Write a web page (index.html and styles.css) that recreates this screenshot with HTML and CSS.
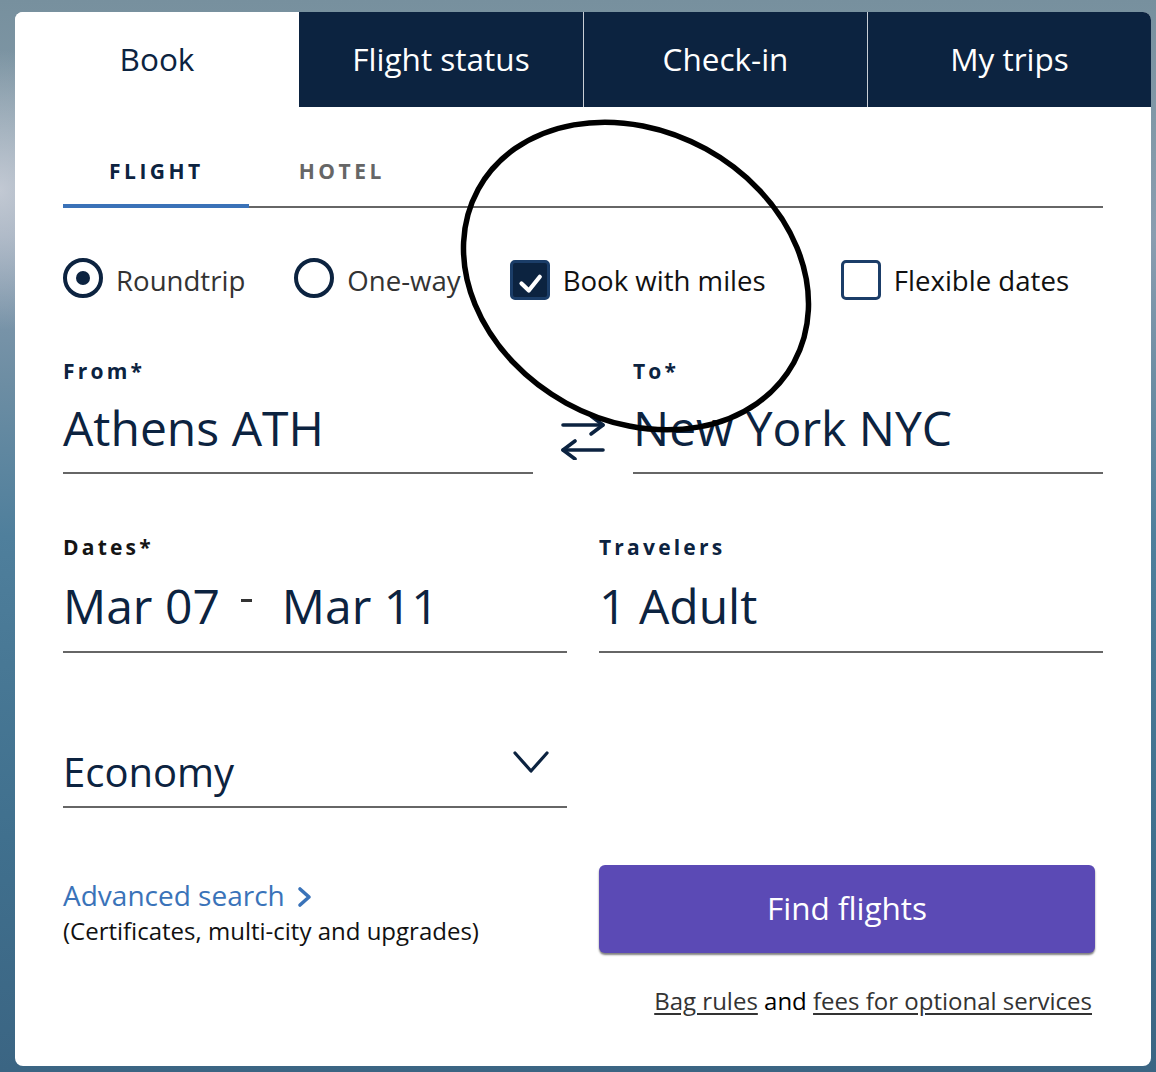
FILE: index.html
```html
<!DOCTYPE html>
<html lang="en">
<head>
<meta charset="utf-8">
<title>Book a flight</title>
<link rel="stylesheet" href="styles.css">
</head>
<body>
<div class="card">
  <nav class="tabs">
    <div class="tab tab-active">Book</div>
    <div class="tab">Flight status</div>
    <div class="tab tab-sep">Check-in</div>
    <div class="tab tab-sep">My trips</div>
  </nav>
  <div class="content">
    <div class="subtabs">
      <div class="subtab subtab-active">FLIGHT</div>
      <div class="subtab">HOTEL</div>
    </div>

    <div class="options">
      <div class="opt"><span class="radio radio-on"></span><span class="opt-text opt-grey">Roundtrip</span></div>
      <div class="opt"><span class="radio"></span><span class="opt-text opt-grey">One-way</span></div>
      <div class="opt"><span class="check check-on"><svg class="tick" viewBox="0 0 34 34" width="34" height="34"><polyline points="8.5,20.5 15.8,27.5 26.8,13.8" fill="none" stroke="#fff" stroke-width="4.2" stroke-linecap="round" stroke-linejoin="round"/></svg></span><span class="opt-text">Book with miles</span></div>
      <div class="opt opt-last"><span class="check"></span><span class="opt-text">Flexible dates</span></div>
    </div>

    <div class="route">
      <div class="field">
        <div class="label">From*</div>
        <div class="value">Athens ATH</div>
      </div>
      <div class="swap">
        <svg viewBox="0 0 46 48" width="46" height="48">
          <g fill="none" stroke="#0c2340" stroke-width="3.6" stroke-linecap="round" stroke-linejoin="round">
            <line x1="3" y1="13" x2="43" y2="13"/>
            <polyline points="31,4 43,13 31,22"/>
            <line x1="3" y1="38" x2="43" y2="38"/>
            <polyline points="15,29 3,38 15,47"/>
          </g>
        </svg>
      </div>
      <div class="field">
        <div class="label">To*</div>
        <div class="value">New York NYC</div>
      </div>
    </div>

    <div class="pair">
      <div class="field field-tall">
        <div class="label label-dark">Dates*</div>
        <div class="value dates"><span>Mar 07</span><span class="dash"></span><span>Mar 11</span></div>
      </div>
      <div class="field field-tall">
        <div class="label">Travelers</div>
        <div class="value">1 Adult</div>
      </div>
    </div>

    <div class="pair">
      <div class="field field-select">
        <div class="value value-select">Economy</div>
        <svg class="chev" viewBox="0 0 38 24" width="38" height="24"><polyline points="3,3 19,21 35,3" fill="none" stroke="#0c2340" stroke-width="3.2" stroke-linecap="round" stroke-linejoin="round"/></svg>
      </div>
    </div>

    <div class="pair bottom">
      <div class="adv">
        <div class="adv-link">Advanced search<svg class="adv-chev" viewBox="0 0 16 22" width="16" height="22"><polyline points="3,3 12,11 3,19" fill="none" stroke="#3a73b9" stroke-width="3.6" stroke-linecap="round" stroke-linejoin="round"/></svg></div>
        <div class="adv-note">(Certificates, multi-city and upgrades)</div>
      </div>
      <div class="submit">
        <button class="find" type="button">Find flights</button>
        <div class="fees"><span class="u">Bag rules</span> <span class="and">and</span> <span class="u">fees for optional services</span></div>
      </div>
    </div>
  </div>
</div>
<svg class="annotation" viewBox="0 0 1156 1072" width="1156" height="1072">
  <ellipse cx="636" cy="276" rx="180" ry="145" transform="rotate(28.8 636 276)" fill="none" stroke="#000" stroke-width="5.5"/>
</svg>
</body>
</html>
```

FILE: styles.css
```css
* { box-sizing: border-box; }

html, body {
  margin: 0;
  padding: 0;
}

body {
  width: 1156px;
  height: 1072px;
  overflow: hidden;
  font-family: "Open Sans", "Noto Sans", sans-serif;
  background:
    radial-gradient(ellipse 120px 140px at 0px 190px, rgba(214, 216, 224, 0.75), rgba(214, 216, 224, 0) 100%),
    linear-gradient(180deg, #77909e 0%, #8299a8 12%, #8a9db0 22%, #6c8da3 36%, #4f7f9c 50%, #487895 62%, #40708e 78%, #3b6583 100%);
}

.card {
  margin: 12px 0 0 15px;
  width: 1136px;
  height: 1054px;
  background: #fff;
  border-radius: 8px;
  overflow: hidden;
}

/* Top tabs */
.tabs {
  display: grid;
  grid-template-columns: repeat(4, 1fr);
  height: 95px;
}

.tab {
  display: flex;
  align-items: center;
  justify-content: center;
  background: #0c2340;
  color: #fff;
  font-size: 31.5px;
  padding-bottom: 2px;
}

.tab-active {
  background: #fff;
  color: #0c2340;
}

.tab-sep {
  border-left: 1.5px solid #c9ced6;
}

/* Content */
.content {
  padding: 0 48px;
}

.subtabs {
  display: flex;
  border-bottom: 2px solid #666;
}

.subtab {
  padding: 49px 46px 18px 50px;
  line-height: 30px;
  font-size: 21px;
  font-weight: 700;
  letter-spacing: 3.5px;
  color: #666;
  border-bottom: 4px solid transparent;
  margin-bottom: -2px;
}

.subtab-active {
  color: #0c2340;
  border-bottom-color: #3a72b8;
  padding-left: 46px;
  padding-right: 45px;
}

/* Options */
.options {
  display: flex;
  align-items: center;
  gap: 49px;
  margin-top: 52px;
  height: 40px;
}

.opt {
  display: flex;
  align-items: center;
  gap: 13px;
}

.opt-last {
  margin-left: 26px;
}

.opt-text {
  font-size: 27.6px;
  color: #111;
  line-height: 40px;
}

.opt-grey {
  color: #333;
}

.radio {
  width: 40px;
  height: 40px;
  border-radius: 50%;
  border: 4.5px solid #0c2340;
  display: flex;
  align-items: center;
  justify-content: center;
  margin-top: -4px;
}

.radio-on::after {
  content: "";
  width: 14px;
  height: 14px;
  border-radius: 50%;
  background: #0c2340;
}

.check {
  width: 40px;
  height: 40px;
  border-radius: 5px;
  border: 3px solid #1b3d68;
  background: #fff;
  display: flex;
}

.check-on {
  background: #0c2340;
}

.tick {
  display: block;
}

/* Fields */
.route {
  display: grid;
  grid-template-columns: 470px 1fr 470px;
  margin-top: 57px;
}

.pair {
  display: grid;
  grid-template-columns: 1fr 1fr;
  column-gap: 32px;
  margin-top: 59px;
}

.field {
  border-bottom: 2px solid #666;
  padding-bottom: 16px;
}

.label {
  font-size: 21px;
  line-height: 28px;
  font-weight: 700;
  letter-spacing: 3.2px;
  color: #0c2340;
}

.label-dark {
  color: #151515;
}

.value {
  margin-top: 15px;
  font-size: 48px;
  line-height: 56px;
  color: #0c2340;
  white-space: nowrap;
}

.field-tall {
  padding-bottom: 17px;
}

.field-tall .value {
  margin-top: 17px;
}

.dates {
  display: flex;
  align-items: flex-start;
}

.dash {
  width: 11px;
  height: 3px;
  background: #333;
  margin: 21px 30px 0 21px;
}

.swap {
  align-self: end;
  display: flex;
  justify-content: center;
  margin-bottom: 14px;
}

.swap svg {
  display: block;
}

.field-select {
  margin-top: 34px;
  display: flex;
  justify-content: space-between;
  align-items: flex-start;
  padding-bottom: 10px;
}

.value-select {
  margin-top: 2px;
  font-size: 40px;
  line-height: 48px;
}

.chev {
  display: block;
  margin-top: 4px;
  margin-right: 17px;
}

/* Bottom */
.bottom {
  margin-top: 57px;
}

.adv {
  padding-top: 12px;
}

.adv-link {
  font-size: 28px;
  line-height: 36px;
  color: #3a73b9;
}

.adv-chev {
  margin-left: 12px;
  vertical-align: -2px;
}

.adv-note {
  margin-top: 3px;
  font-size: 24px;
  line-height: 30px;
  color: #111;
}

.submit {
  display: flex;
  flex-direction: column;
  align-items: flex-start;
}

.find {
  width: 496px;
  height: 88px;
  border: none;
  border-radius: 6px;
  background: #5b4ab5;
  color: #fff;
  font-family: "Open Sans", "Noto Sans", sans-serif;
  font-size: 31.5px;
  box-shadow: 0 2px 2px rgba(0, 0, 0, 0.5);
  padding: 0 0 4px;
}

.fees {
  margin-top: 33px;
  align-self: stretch;
  text-align: right;
  padding-right: 11px;
  font-size: 24px;
  line-height: 30px;
  color: #333;
}

.fees .u {
  text-decoration: underline;
  text-underline-offset: 3px;
}

.fees .and {
  color: #000;
}

/* Hand-drawn annotation overlay */
.annotation {
  position: absolute;
  left: 0;
  top: 0;
  pointer-events: none;
}
```
